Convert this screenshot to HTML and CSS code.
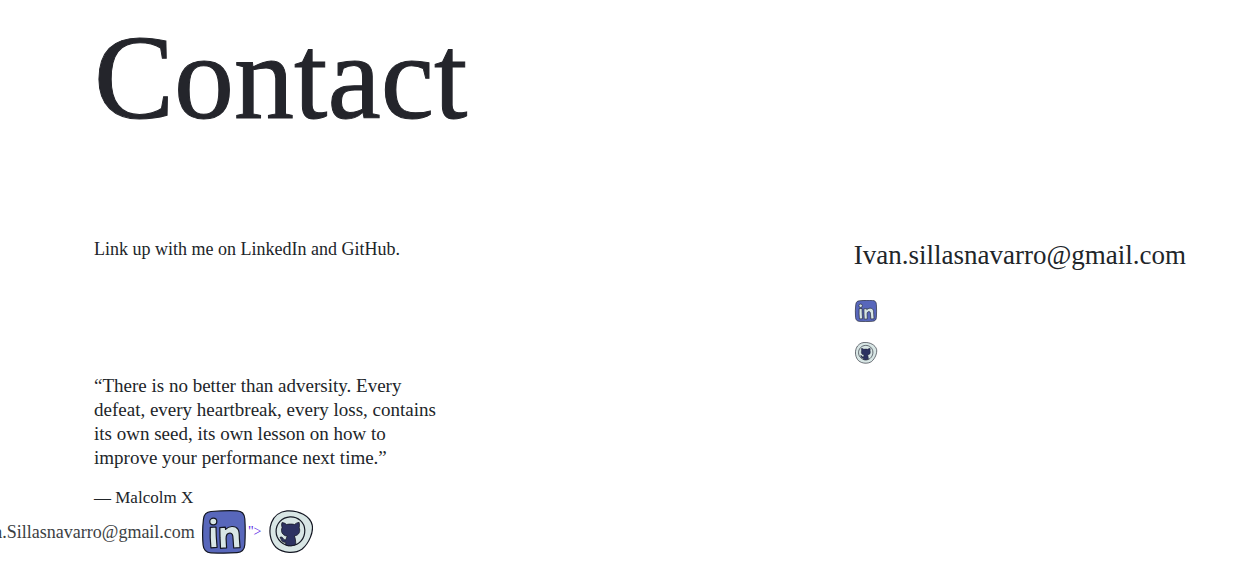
FILE: index.html
```html
<!DOCTYPE html>
<html lang="en">
<head>
<meta charset="utf-8">
<meta name="viewport" content="width=device-width, initial-scale=1">
<title>Contact</title>
<link rel="stylesheet" href="styles.css">
</head>
<body>
<svg class="symbols" aria-hidden="true">
  <symbol id="linkedin" viewBox="0 0 44 44">
    <path d="M9 1.500C19 .7 27 .5 35 .8c5 .2 7.500 3 7.800 8 .6 9 .5 18 0 26-.3 5-3 7.500-7.800 7.900-9 .6-18 .5-26 .1-5-.3-7.500-3-7.900-7.800C.3 26 .5 17 1.500 9 2 4 4.500 1.900 9 1.500Z" fill="#5867bb" stroke="#141723" stroke-width="1.200"/>
    <g fill="#d8e6e5" stroke="#141723" stroke-width="1.200" stroke-linejoin="round">
      <ellipse cx="11.300" cy="11.500" rx="3.500" ry="3.400"/>
      <path d="M8.300 17.300l5.700-.3.300 9.700.8 10.700-6.200.4-.7-10Z"/>
      <path d="M17.800 17.600l5.500-.4.300 2.200c3-3.400 9.600-4.200 12.300-.3 1.700 2.500 1.300 6 1.500 9.500l.7 9-6.400.4-.7-9.700c-.1-3-.7-5.200-3.100-5.100-3 .1-3.900 2.200-3.800 5.400l.5 9.300-6.100.4-.5-10.400Z"/>
    </g>
  </symbol>
  <symbol id="github" viewBox="0 0 44 44">
    <path d="M18 .9C30 .2 41 6 43.200 15c1.400 7-3 18-10 24-7 5-19 4.500-26-1.500C.5 31-.4 20 2.500 12.500 5 6 11 1.500 18 .9Z" fill="#d8e6e5" stroke="#141723" stroke-width="1.200"/>
    <path d="M21 6.800c8-.4 14.500 5.500 14.800 13.200.2 8-5 15.300-13.300 15.700C14 36 7.200 29.500 7.100 21.500 7 13.500 13 7.200 21 6.800Z" fill="#d8e6e5" stroke="#141723" stroke-width="1.200"/>
    <path d="M13 12.600c1.700.1 3.400.8 4.600 1.900 2.500-.6 5.400-.6 8 0 1.200-1.200 2.900-2 4.500-2.100.5 2 .4 3.600.1 5 1.200 3.700.6 7.500-4.900 8.600 1.300 2.300 1.200 5.500 1.600 8.400-2.900 1.600-7.200 1.900-10.300.6l.2-2.700c-3.200.2-4.200-1.300-4.600-2.700-.3-1.100-1.200-1.500-1.100-2.300 1.500-.8 2.800.3 3.300 1.600.6 1 1.700 1.200 2.700.7.100-1.400.5-2.500 1.200-3.400-5.600-1-6.700-5-5.200-8.700-.5-1.600-.7-3.300-.1-4.900Z" fill="#2d3261" stroke="#141723" stroke-width=".8"/>
  </symbol>
</svg>
<main class="contact">
  <h1 class="title">Contact</h1>
  <div class="columns">
    <section class="intro">
      <p>Link up with me on LinkedIn and GitHub.</p>
      <blockquote class="quote">
        <p>“There is no better than adversity. Every<br>defeat, every heartbreak, every loss, contains<br>its own seed, its own lesson on how to<br>improve your performance next time.”</p>
        <p class="author">— Malcolm X</p>
      </blockquote>
    </section>
    <section class="details">
      <a class="email" href="mailto:Ivan.sillasnavarro@gmail.com">Ivan.sillasnavarro@gmail.com</a>
      <a class="social" href="#linkedin" aria-label="LinkedIn"><svg><use href="#linkedin"/></svg></a>
      <a class="social" href="#github" aria-label="GitHub"><svg><use href="#github"/></svg></a>
    </section>
  </div>
</main>
<footer class="footer">
  <span>Ivan.Sillasnavarro@gmail.com</span>
  <a class="badge" href="#linkedin" aria-label="LinkedIn"><svg><use href="#linkedin"/></svg><span>"&gt;</span></a>
  <a class="badge" href="#github" aria-label="GitHub"><svg><use href="#github"/></svg></a>
</footer>
</body>
</html>
```
FILE: styles.css
```css
* { box-sizing: border-box; }
body {
  margin: 0;
  overflow-x: hidden;
  background: #fff;
  color: #212529;
  font: 18px/24px "Liberation Serif", serif;
}
h1, p, blockquote { margin: 0; }
a { color: inherit; text-decoration: none; }
svg { display: block; }
.symbols { position: absolute; width: 0; height: 0; }
.contact { padding: 18px 64px 0 94px; }
.title {
  color: #24252b;
  font-size: 120px;
  font-weight: 400;
  line-height: 120px;
  -webkit-text-stroke: 1px #24252b;
}
.columns {
  display: flex;
  justify-content: space-between;
  padding-top: 99px;
}
.quote { padding-top: 113px; font-size: 19px; }
.author { padding-top: 16px; font-size: 17px; }
.details {
  display: flex;
  flex-direction: column;
  align-items: flex-start;
  gap: 20px;
}
.email { font-size: 27px; line-height: 36px; padding-bottom: 7px; }
.social svg { width: 24px; height: 22px; }
.footer {
  display: flex;
  justify-content: flex-end;
  align-items: center;
  gap: 7px;
  width: 25%;
  color: #3c3f43;
}
.badge {
  display: flex;
  align-items: center;
  gap: 2px;
  color: #5a28e6;
  font-size: 14px;
}
.badge svg { width: 44px; height: 44px; }
```
